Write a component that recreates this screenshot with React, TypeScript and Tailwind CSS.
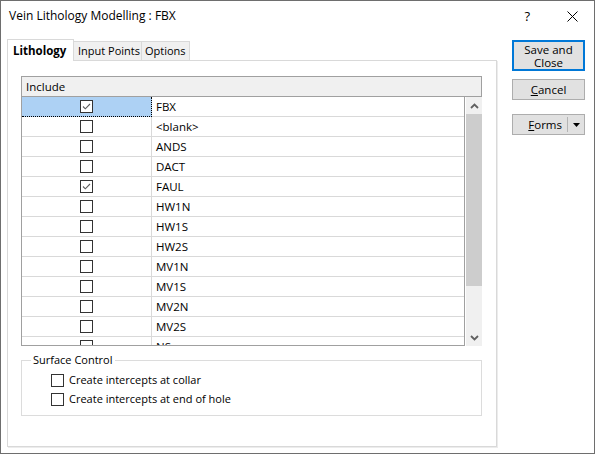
import React from "react";

const FONT = '"Open Sans", "Noto Sans", "Liberation Sans", sans-serif';

function Box({ checked }: { checked?: boolean }) {
  return (
    <div className="w-[13px] h-[13px] border border-[#333333] bg-white shrink-0 flex items-center justify-center">
      {checked && (
        <svg width="11" height="11" viewBox="0 0 11 11">
          <path d="M2 5.5 L4.3 7.8 L9 3" stroke="#5c5c5c" strokeWidth="1.1" fill="none" />
        </svg>
      )}
    </div>
  );
}

const rows: { name: string; checked: boolean }[] = [
  { name: "FBX", checked: true },
  { name: "<blank>", checked: false },
  { name: "ANDS", checked: false },
  { name: "DACT", checked: false },
  { name: "FAUL", checked: true },
  { name: "HW1N", checked: false },
  { name: "HW1S", checked: false },
  { name: "HW2S", checked: false },
  { name: "MV1N", checked: false },
  { name: "MV1S", checked: false },
  { name: "MV2N", checked: false },
  { name: "MV2S", checked: false },
  { name: "NS", checked: false },
];

export default function App() {
  return (
    <div className="w-[595px] h-[456px] bg-white text-black text-[11px]" style={{ fontFamily: FONT }}>
      <div className="w-[595px] h-[454px] border border-[#6e6e6e] bg-white flex flex-col">
        {/* Title bar */}
        <div className="h-[30px] flex items-center justify-between pl-[8px]">
          <span className="text-[12px] leading-none">Vein Lithology Modelling : FBX</span>
          <div className="flex items-center">
            <span className="text-[13px] leading-none mr-[37px]">?</span>
            <svg width="11" height="11" viewBox="0 0 11 11" className="mr-[16px]">
              <path d="M0.5 0.5 L10.5 10.5 M10.5 0.5 L0.5 10.5" stroke="#000" strokeWidth="1" />
            </svg>
          </div>
        </div>

        {/* Body */}
        <div className="flex pl-[6px] pt-[8px]">
          {/* Tab control */}
          <div className="w-[490px] flex flex-col">
            <div className="h-[21px] flex items-end">
              <div className="relative z-10 -mb-px h-[22px] w-[67px] bg-white border border-b-0 border-[#d9d9d9] flex items-center pl-[5px] font-bold text-[11.5px]">
                Lithology
              </div>
              <div className="h-[19px] w-[69px] -ml-px bg-[#f0f0f0] border border-b-0 border-[#d9d9d9] flex items-center pl-[4px]">
                Input Points
              </div>
              <div className="h-[19px] w-[49px] -ml-px bg-[#f0f0f0] border border-b-0 border-[#d9d9d9] flex items-center pl-[3px]">
                Options
              </div>
            </div>
            <div className="h-[387px] border border-[#d9d9d9] bg-white shadow-[1px_1px_0_#ececec] pl-[13px] pt-[15px]">
              {/* Grid */}
              <div className="w-[461px] flex flex-col">
                <div className="h-[21px] border border-[#a0a0a0] bg-[#f0f0f0] flex items-center pl-[4px] text-[11.5px]">
                  Include
                </div>
                <div className="flex h-[249px]">
                  <div className="w-[444px] h-[249px] border-l border-r border-b border-[#a0a0a0] overflow-hidden">
                    {rows.map((r, i) => {
                      const sel = i === 0;
                      return (
                        <div key={r.name} className="flex h-[20px]">
                          <div
                            className={
                              sel
                                ? "w-[130px] h-[20px] flex items-center justify-center bg-[#add1f4] border-r border-b border-dotted border-black"
                                : "w-[130px] h-[20px] flex items-center justify-center border-r border-b border-[#d9d9d9]"
                            }
                          >
                            <Box checked={r.checked} />
                          </div>
                          <div className="flex-1 h-[20px] flex items-center pl-[4px] border-b border-[#d9d9d9] text-[11.5px]">
                            {r.name}
                          </div>
                        </div>
                      );
                    })}
                  </div>
                  <div className="ml-px w-[16px] h-[249px] bg-[#f0f0f0] flex flex-col">
                    <div className="h-[17px] flex items-center justify-center">
                      <svg width="9" height="6" viewBox="0 0 9 6">
                        <path d="M1 5 L4.5 1.5 L8 5" stroke="#606060" strokeWidth="1.8" fill="none" />
                      </svg>
                    </div>
                    <div className="h-[172px] bg-[#cdcdcd]" />
                    <div className="flex-1" />
                    <div className="h-[17px] flex items-center justify-center">
                      <svg width="9" height="6" viewBox="0 0 9 6">
                        <path d="M1 1 L4.5 4.5 L8 1" stroke="#606060" strokeWidth="1.8" fill="none" />
                      </svg>
                    </div>
                  </div>
                </div>
              </div>

              {/* Surface Control */}
              <div className="relative mt-[14px] w-[461px] h-[56px] border border-[#dcdcdc] pl-[29px] pt-[13px] flex flex-col gap-[6px]">
                <span className="absolute -top-[8px] left-[9px] px-[2px] bg-white leading-[14px]">Surface Control</span>
                <div className="flex items-center h-[13px]">
                  <Box />
                  <span className="ml-[5px]">Create intercepts at collar</span>
                </div>
                <div className="flex items-center h-[13px]">
                  <Box />
                  <span className="ml-[5px]">Create intercepts at end of hole</span>
                </div>
              </div>
            </div>
          </div>

          {/* Buttons */}
          <div className="ml-[15px] mt-[1px] w-[73px] flex flex-col">
            <button className="h-[31px] border-2 border-[#0078d7] bg-[#e1e1e1] text-center leading-[13px] text-[11.5px]">
              Save and
              <br />
              Close
            </button>
            <button className="mt-[8px] h-[21px] border border-[#adadad] bg-[#e1e1e1] text-center text-[11.5px]">
              <u>C</u>ancel
            </button>
            <div className="mt-[14px] h-[21px] border border-[#adadad] bg-[#e1e1e1] flex items-center">
              <div className="w-[54px] text-right pr-[5px] text-[11.5px]">
                <u>F</u>orms
              </div>
              <div className="w-px h-[15px] bg-[#b4b4b4]" />
              <div className="flex-1 flex items-center justify-center">
                <svg width="7" height="4" viewBox="0 0 7 4">
                  <path d="M0 0 L7 0 L3.5 4 Z" fill="#000" />
                </svg>
              </div>
            </div>
          </div>
        </div>
      </div>
    </div>
  );
}
